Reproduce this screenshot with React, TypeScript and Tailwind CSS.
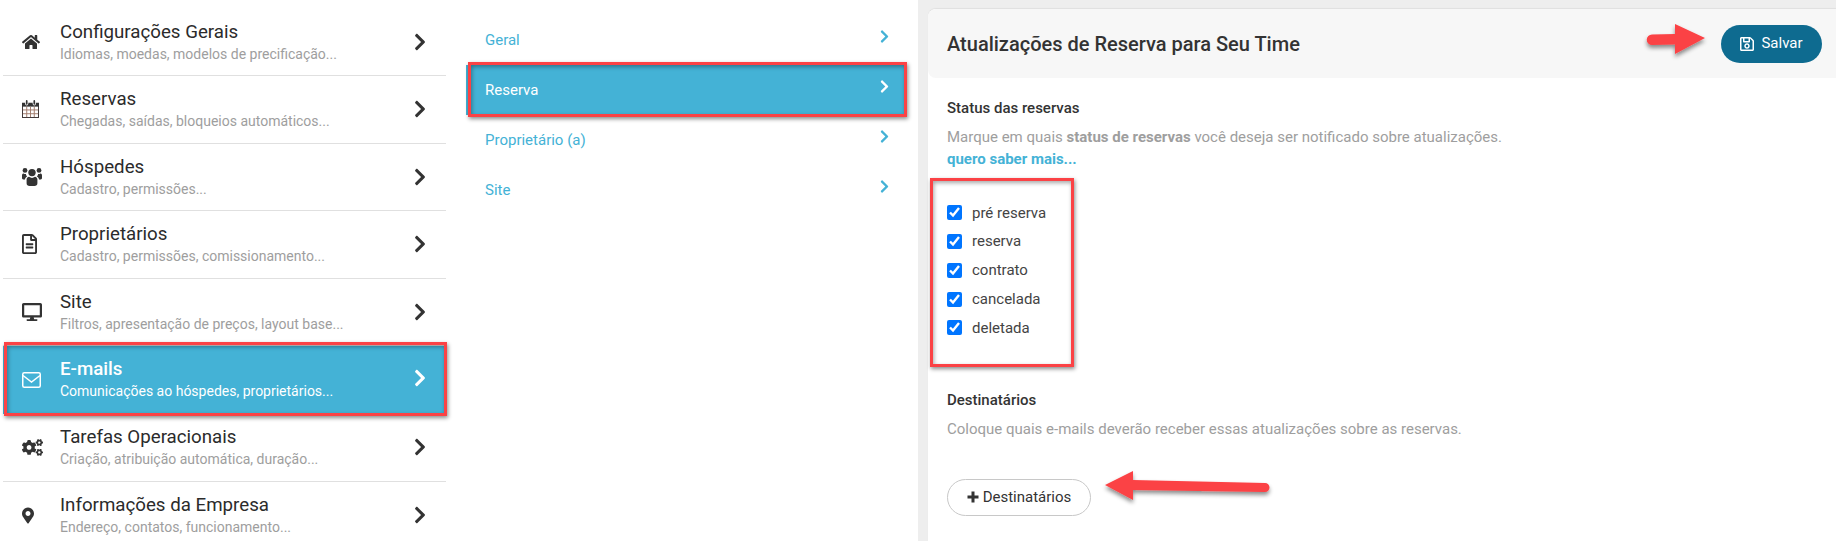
import React from "react";
import { FaChevronRight, FaHome, FaRegFileAlt, FaDesktop, FaCogs, FaMapMarkerAlt, FaRegSave } from "react-icons/fa";

function CalendarIcon() {
  return (
    <svg viewBox="0 0 18 19" className="w-[17px] h-[18px]" fill="none">
      <rect x="0.5" y="3.5" width="17" height="15" fill="#fff" stroke="#3a3030" />
      <path d="M0 3h18v4H0z" fill="#333" />
      <path d="M1 10.5h16M1 14.5h16M5 7v11M9 7v11M13 7v11" stroke="#a07a6a" strokeWidth="1" />
      <path d="M5 1v3M13 1v3" stroke="#fff" strokeWidth="3.4" strokeLinecap="round" />
      <path d="M5 1v3M13 1v3" stroke="#333" strokeWidth="1.8" strokeLinecap="round" />
    </svg>
  );
}

function UsersIcon() {
  return (
    <svg viewBox="0 0 20 19" className="w-[20px] h-[19px]" fill="#333">
      <circle cx="10" cy="5.6" r="3.7" />
      <circle cx="3" cy="3.4" r="2.4" />
      <circle cx="17" cy="3.4" r="2.4" />
      <path d="M4.6 12.5C4.6 10.6 6 9.8 7 9.8c1 .8 2 1.1 3 1.1s2-.3 3-1.1c1 0 2.4.8 2.4 2.7v3.7c0 1.7-1.2 2.8-3 2.8H7.6c-1.8 0-3-1.1-3-2.8z" />
      <path d="M0 8.4C0 6.9.8 6.4 1.6 6.4c.8.6 1.5.8 2.4.6-.1.9.4 1.8 1.2 2.4-1.4.5-2.1 1.6-2.2 3H1.3C.5 12.4 0 11.9 0 11.1z" />
      <path d="M20 8.4c0-1.5-.8-2-1.6-2-.8.6-1.5.8-2.4.6.1.9-.4 1.8-1.2 2.4 1.4.5 2.1 1.6 2.2 3h1.7c.8 0 1.3-.5 1.3-1.3z" />
    </svg>
  );
}

function EnvelopeIcon() {
  return (
    <svg viewBox="0 0 19 16" className="w-[19px] h-[16px]" fill="none" stroke="#fff" strokeWidth="1.5">
      <rect x="0.75" y="0.75" width="17.5" height="14.5" rx="1.5" />
      <path d="M1 3.5l8.5 6.5L18 3.5" />
    </svg>
  );
}

function PlusIcon() {
  return (
    <svg viewBox="0 0 12 12" className="w-[12px] h-[12px]" fill="#333">
      <path d="M4.5 0.5h3v4h4v3h-4v4h-3v-4h-4v-3h4z" />
    </svg>
  );
}

const mainItems = [
  { t: "Configurações Gerais", s: "Idiomas, moedas, modelos de precificação...", i: <FaHome className="w-[18px] h-[16px]" /> },
  { t: "Reservas", s: "Chegadas, saídas, bloqueios automáticos...", i: <CalendarIcon /> },
  { t: "Hóspedes", s: "Cadastro, permissões...", i: <UsersIcon /> },
  { t: "Proprietários", s: "Cadastro, permissões, comissionamento...", i: <FaRegFileAlt className="w-[15px] h-[20px]" /> },
  { t: "Site", s: "Filtros, apresentação de preços, layout base...", i: <FaDesktop className="w-[20px] h-[18px]" /> },
  { t: "E-mails", s: "Comunicações ao hóspedes, proprietários...", i: <EnvelopeIcon />, active: true },
  { t: "Tarefas Operacionais", s: "Criação, atribuição automática, duração...", i: <FaCogs className="w-[21px] h-[17px]" /> },
  { t: "Informações da Empresa", s: "Endereço, contatos, funcionamento...", i: <FaMapMarkerAlt className="w-[12px] h-[17px]" />, last: true },
];

const subItems = ["Geral", "Reserva", "Proprietário (a)", "Site"];
const statuses = ["pré reserva", "reserva", "contrato", "cancelada", "deletada"];

function RedBox({ className }: { className: string }) {
  return (
    <div
      className={
        "absolute border-[3px] border-[#fb4245] shadow-[1px_2px_4px_rgba(0,0,0,0.45),inset_1px_2px_4px_rgba(0,0,0,0.35)] pointer-events-none " +
        className
      }
    />
  );
}

export default function App() {
  return (
    <div className="relative w-[1836px] h-[541px] overflow-hidden bg-white flex font-['Roboto',sans-serif]">
      {/* Main menu */}
      <div className="w-[443px] ml-[3px] pt-[8.4px] shrink-0">
        {mainItems.map((m) => (
          <div
            key={m.t}
            className={
              "h-[67.6px] flex items-center " +
              (m.active ? "bg-[#44b2d6] relative" : m.last ? "" : "border-b border-[#e0e0e0]")
            }
          >
            <div className={"w-[57px] pl-[19px] flex items-center shrink-0 " + (m.active ? "text-white" : "text-[#333]")}>{m.i}</div>
            <div className={"flex-1 " + (m.active ? "" : "mt-[2px]")}>
              <div className={"text-[18.72px] leading-[22px] " + (m.active ? "font-medium text-white" : "text-[#2b2b2b]")}>{m.t}</div>
              <div className={"text-[14px] leading-[22px] " + (m.active ? "text-white" : "text-[#9e9e9e]")}>{m.s}</div>
            </div>
            <FaChevronRight className={"w-[12px] h-[20px] mr-[20px] " + (m.active ? "text-white -mt-[4px]" : "text-[#333]")} />
          </div>
        ))}
      </div>

      {/* Sub menu */}
      <div className="w-[441px] ml-[20px] pt-[15px] shrink-0">
        {subItems.map((s, i) => (
          <div
            key={s}
            className={
              "h-[50px] flex items-center justify-between pl-[19px] pr-[18px] text-[15px] " +
              (i === 1 ? "bg-[#44b2d6] text-white" : "text-[#44b2d6]")
            }
          >
            <span>{s}</span>
            <FaChevronRight className="w-[9px] h-[15px] -mt-[8px]" />
          </div>
        ))}
      </div>

      {/* Right panel */}
      <div className="flex-1 ml-[11px] bg-[#eeeeee] pl-[10px] pt-[9px]">
        <div className="bg-white h-full rounded-tl-[8px] shadow-[0_-1px_1px_rgba(0,0,0,0.06)]">
          <div className="h-[69px] bg-[#f7f7f7] rounded-l-[8px] flex items-center justify-between pl-[19px] pr-[14px]">
            <h1 className="text-[20px] font-medium text-[#333]">Atualizações de Reserva para Seu Time</h1>
            <button className="w-[101px] h-[38px] rounded-full bg-[#0e6b90] text-white text-[15px] flex items-center justify-center gap-[7px]">
              <FaRegSave className="w-[14px] h-[16px]" />
              Salvar
            </button>
          </div>
          <div className="pl-[19px] pt-[19px]">
            <div className="text-[15px] font-medium leading-[22px] text-[#333]">Status das reservas</div>
            <p className="mt-[7px] text-[15px] leading-[22px] text-[#9e9e9e]">
              Marque em quais <b className="font-bold">status de reservas</b> você deseja ser notificado sobre atualizações.
            </p>
            <a className="block text-[15px] leading-[22px] font-bold text-[#44b2d6]">quero saber mais...</a>
            <div className="mt-[28.6px] flex flex-col">
              {statuses.map((s) => (
                <label key={s} className="h-[28.75px] flex items-center gap-[10px] text-[15px] text-[#444]">
                  <input type="checkbox" checked readOnly className="w-[15px] h-[15px] m-0" />
                  {s}
                </label>
              ))}
            </div>
            <div className="mt-[46.6px] text-[15px] font-medium leading-[22px] text-[#333]">Destinatários</div>
            <p className="mt-[7px] text-[15px] leading-[22px] text-[#9e9e9e]">Coloque quais e-mails deverão receber essas atualizações sobre as reservas.</p>
            <button className="mt-[39px] w-[144px] h-[37px] rounded-full border border-[#c8c8c8] bg-white text-[15px] text-[#333] flex items-center justify-center gap-[4px]">
              <PlusIcon />
              Destinatários
            </button>
          </div>
        </div>
      </div>

      {/* Annotations */}
      <RedBox className="left-[4px] top-[342px] w-[443px] h-[74px]" />
      <RedBox className="left-[468px] top-[62px] w-[439px] h-[55px]" />
      <RedBox className="left-[930px] top-[178px] w-[144px] h-[189px]" />

      <svg className="absolute left-[1640px] top-[20px] overflow-visible" width="70" height="40" viewBox="0 0 70 40">
        <defs>
          <filter id="s1" x="-20%" y="-30%" width="140%" height="170%">
            <feDropShadow dx="0" dy="3" stdDeviation="2" floodColor="#000" floodOpacity="0.45" />
          </filter>
        </defs>
        <path d="M12 14.5L35 14V4L65 18L35 34V24.5L12 25A5.25 5.25 0 0 1 12 14.5Z" fill="#fb4245" filter="url(#s1)" />
      </svg>
      <svg className="absolute left-[1100px] top-[465px] overflow-visible" width="175" height="45" viewBox="0 0 175 45">
        <defs>
          <filter id="s2" x="-10%" y="-30%" width="120%" height="170%">
            <feDropShadow dx="0" dy="3" stdDeviation="2" floodColor="#000" floodOpacity="0.45" />
          </filter>
        </defs>
        <path d="M5 20L33 6V15L165 18A4.5 4.5 0 0 1 165 27L33 25V35Z" fill="#fb4245" filter="url(#s2)" />
      </svg>
    </div>
  );
}
